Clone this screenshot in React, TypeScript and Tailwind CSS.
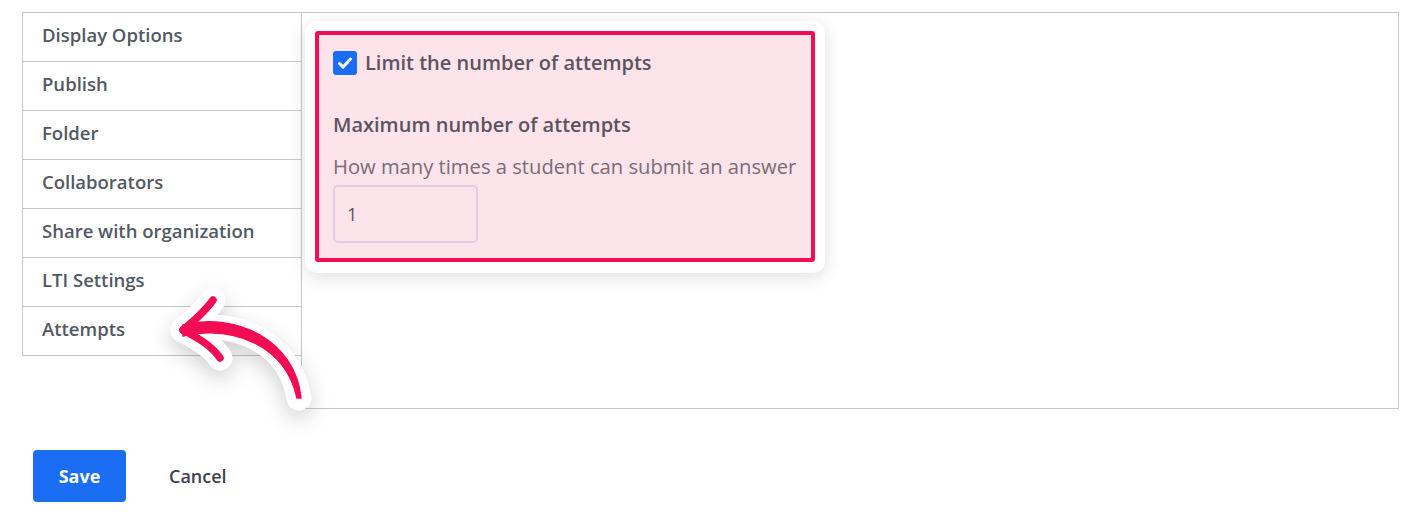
import React from 'react';

const tabs = [
  'Display Options',
  'Publish',
  'Folder',
  'Collaborators',
  'Share with organization',
  'LTI Settings',
  'Attempts',
];

const CheckIcon = () => (
  <svg width="18" height="18" viewBox="0 0 18 18" fill="none">
    <path
      d="M3.5 9.5l3.6 3.6L14.5 5"
      stroke="white"
      strokeWidth="3"
      strokeLinecap="round"
      strokeLinejoin="round"
    />
  </svg>
);

const Arrow = () => (
  <svg
    className="absolute left-[160px] top-[280px] drop-shadow-[0_8px_10px_rgba(0,0,0,0.18)]"
    width="180"
    height="140"
    viewBox="0 0 180 140"
    fill="none"
  >
    <g stroke="white" strokeWidth="25" strokeLinecap="round" strokeLinejoin="round">
      <path d="M23 50 C75 38 130 62 139 118" />
      <path d="M23 50 C35 40 46 30 53 20" />
      <path d="M23 50 C38 58 52 66 60 78" />
    </g>
    <path
      d="M23 45 C76 32 135 60 141 118 L137 118 C126 67 75 44 23 56 Z"
      fill="#f20c54"
      stroke="#f20c54"
      strokeWidth="1.5"
      strokeLinejoin="round"
    />
    <g stroke="#f20c54" strokeLinecap="round" strokeLinejoin="round">
      <path d="M23 50 C35 40 46 30 53 20" strokeWidth="7.5" />
      <path d="M23 50 C38 58 52 66 60 78" strokeWidth="7.5" />
    </g>
  </svg>
);

export default function App() {
  return (
    <div className="relative w-[1410px] h-[518px] bg-white pl-[22px] pt-3 pr-[11px] font-['Open_Sans',sans-serif]">
      <div className="flex">
        <div className="w-[280px] shrink-0 self-start border-l border-t border-r border-[#c8c8c8]">
          {tabs.map((t) => (
            <div
              key={t}
              className="h-[49px] border-b border-[#c8c8c8] pl-[19px] pb-1 flex items-center text-[18.5px] font-semibold text-[#525962]"
            >
              {t}
            </div>
          ))}
        </div>
        <div className="-ml-px flex-1 h-[397px] border border-[#c8c8c8] pt-2 pl-[3px]">
          <div className="w-[520px] bg-white rounded-xl pt-[10px] px-[10px] pb-[11px] shadow-[0_4px_18px_rgba(0,0,0,0.13)]">
            <div className="bg-[#fde4ea] border-4 border-[#f20c54] rounded-[3px] px-[14px] pt-[15px] pb-[15px]">
              <div className="flex items-center gap-2 h-[25px]">
                <div className="w-6 h-6 rounded-[3px] bg-[#1b6ef3] flex items-center justify-center">
                  <CheckIcon />
                </div>
                <span className="text-[20px] font-semibold text-[#5c5360]">
                  Limit the number of attempts
                </span>
              </div>
              <div className="mt-9 text-[20px] leading-7 font-semibold text-[#5c5360]">
                Maximum number of attempts
              </div>
              <div className="mt-[13px] text-[20.2px] leading-7 text-[#7a6b74]">
                How many times a student can submit an answer
              </div>
              <div className="mt-[5px] w-[145px] h-[58px] border-2 border-[#e4cde0] rounded-[5px] flex items-center pl-3 text-[18px] text-[#5c5360]">
                1
              </div>
            </div>
          </div>
        </div>
      </div>
      <div className="flex items-center mt-[41px] ml-[11px]">
        <button className="w-[93px] h-[52px] rounded bg-[#1b6ef3] text-white text-[18px] font-bold">
          Save
        </button>
        <button className="ml-[43px] text-[18px] font-semibold text-[#3b4350]">
          Cancel
        </button>
      </div>
      <Arrow />
    </div>
  );
}
